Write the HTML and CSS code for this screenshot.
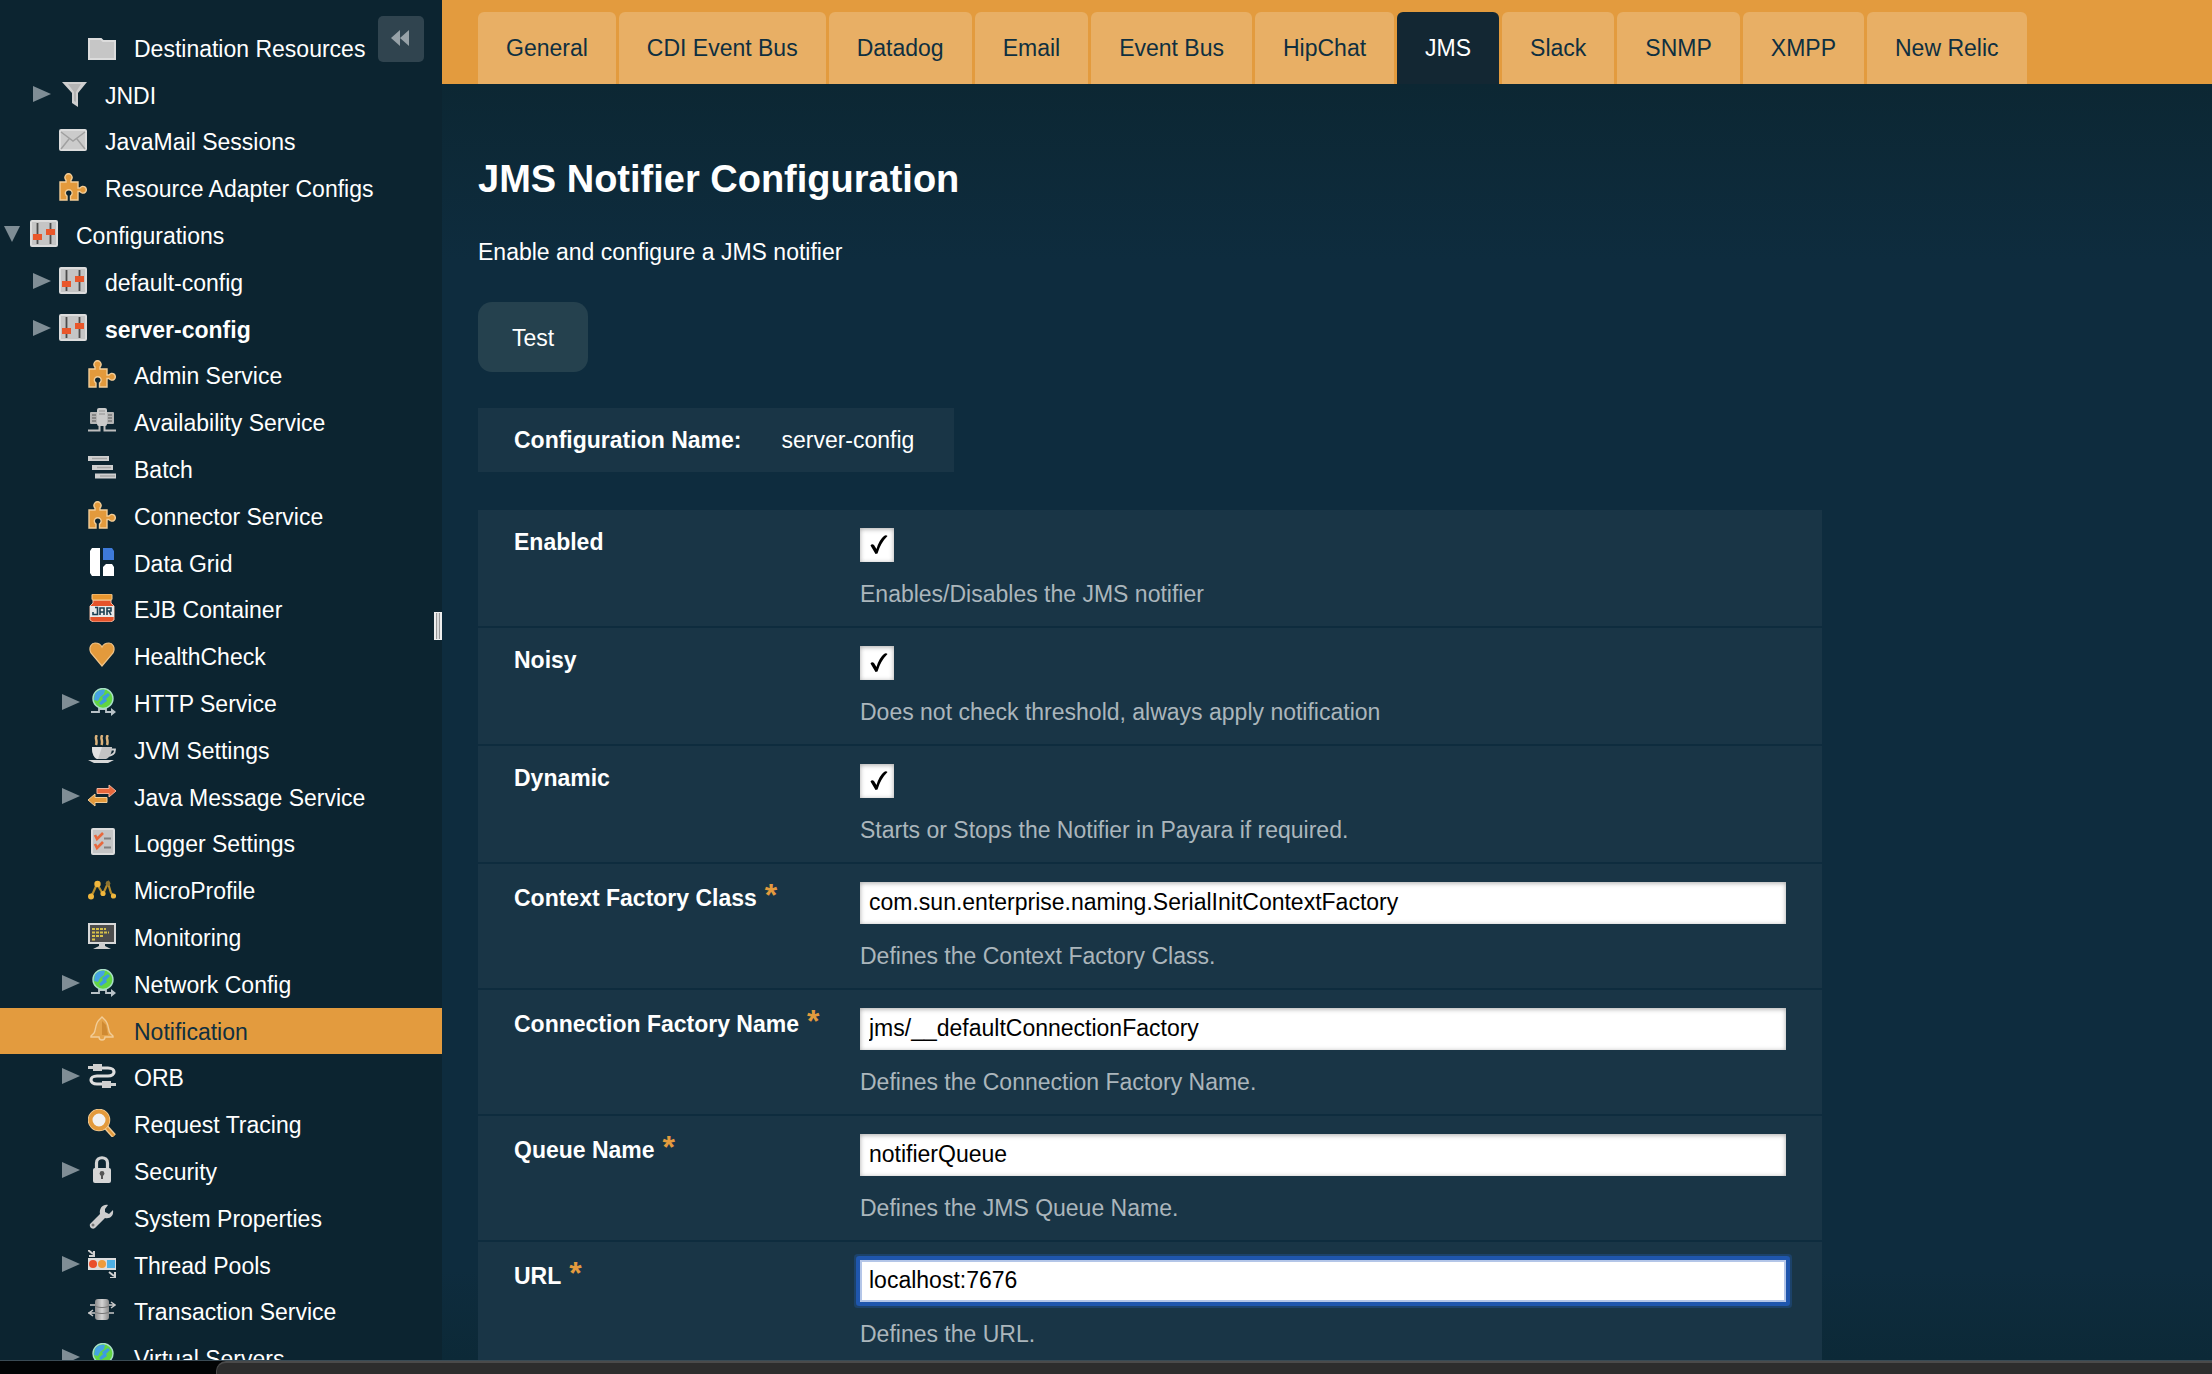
FILE: index.html
```html
<!DOCTYPE html>
<html lang="en">
<head>
<meta charset="utf-8">
<title>JMS Notifier Configuration</title>
<link rel="stylesheet" href="styles.css">
</head>
<body>
<svg class="defs" aria-hidden="true">
  <defs>
    <linearGradient id="metal" x1="0" y1="0" x2="1" y2="0">
      <stop offset="0" stop-color="#8c8c8c"/><stop offset=".5" stop-color="#d4d4d4"/><stop offset="1" stop-color="#8c8c8c"/>
    </linearGradient>
  </defs>
  <symbol id="i-right" viewBox="0 0 18 16"><path d="M0 0L18 8L0 16Z" fill="#7f8d95"/></symbol>
  <symbol id="i-down" viewBox="0 0 18 16"><path d="M0 0H16L8 16Z" fill="#7f8d95"/></symbol>
  <symbol id="i-folder" viewBox="0 0 28 28"><path d="M1 6H13L15 8H27V26H1Z" fill="#c6c6c6" stroke="#dcdcdc" stroke-width="2"/></symbol>
  <symbol id="i-funnel" viewBox="0 0 28 28"><path d="M3 2H28L19 13V27L13 23V13Z" fill="#cfcfcf"/><path d="M9 4H22L17 12V22L15 21V12Z" fill="#b4b4b4"/></symbol>
  <symbol id="i-mail" viewBox="0 0 28 28"><rect x="1" y="4" width="26" height="20" rx="1" fill="#cbcbcb" stroke="#dcdcdc" stroke-width="2"/><path d="M2 6L14 15L26 6M2 23L10 13M26 23L18 13" fill="none" stroke="#a0a0a0" stroke-width="1.5"/></symbol>
  <symbol id="i-puzzle" viewBox="0 0 28 28"><path d="M1 9H7V7A3.6 3.6 0 1 1 12 7V9H19V15H21A3.4 3.4 0 1 1 21 18.500H19V27H11.500V23A3.400 3.400 0 1 0 8 23V27H1Z" fill="#e39a3c" stroke="#f3cd97" stroke-width="1.400"/></symbol>
  <symbol id="i-sliders" viewBox="0 0 28 28"><rect x="1" y="1" width="26" height="25" rx="1" fill="#c5c5c5" stroke="#dcdcdc" stroke-width="2"/><path d="M7.500 3V24M20.500 3V24" stroke="#4c4c4c" stroke-width="1.800"/><path d="M3 14H12V20H3ZM16 9H25V15H16Z" fill="#e9572b"/></symbol>
  <symbol id="i-cluster" viewBox="0 0 28 28"><path d="M0 23.500H11.500V16M28 23.500H16.500V16" fill="none" stroke="#bdbdbd" stroke-width="2"/><rect x="2" y="5" width="8" height="12" rx="1" fill="#b5b5b5"/><rect x="18" y="5" width="8" height="12" rx="1" fill="#b5b5b5"/><rect x="9" y="1" width="10" height="18" rx="2" fill="#cacaca"/><path d="M4 8H8M4 11H8M20 8H24M20 11H24M4 14H8M20 14H24" stroke="#777" stroke-width="1.400"/><path d="M11 4H17M11 7H17" stroke="#909090" stroke-width="1"/></symbol>
  <symbol id="i-batch" viewBox="0 0 28 28"><path d="M0 2H21V7H0ZM4 11H25V16H4ZM7 19.500H28V24.500H7Z" fill="#cfcfcf"/><path d="M4 4.500H19M9 13.500H23M12 22H27" stroke="#a6a6a6" stroke-width="1.500"/></symbol>
  <symbol id="i-grid" viewBox="0 0 28 28"><path d="M4 0H12V28H4L2 25V3Z" fill="#fff"/><path d="M15 0H24L26 3V12H15Z" fill="#3e7ad9"/><path d="M18 16H24L26 19V28H15V19Z" fill="#fff"/></symbol>
  <symbol id="i-jar" viewBox="0 0 28 28"><path d="M5 6H23V9L26 12V26L23 28H5L2 26V12L5 9Z" fill="#e5532b" stroke="#f0b9a0" stroke-width="1"/><rect x="4" y="0" width="20" height="6" rx="1" fill="#e8962f" stroke="#f3cd97" stroke-width="1"/><rect x="2" y="12" width="24" height="11" fill="#e9e9e9"/><path d="M7 13.500H9.500V20.500H5V18M12 21V14H16V21M12 18H16M19 21V14H23V17H19M21 17L23 21" fill="none" stroke="#1b3f52" stroke-width="1.600"/></symbol>
  <symbol id="i-heart" viewBox="0 0 28 28"><path d="M14 25L3 12C0 6 4 2 7 2C11 2 13 4 14 6C15 4 17 2 21 2C24 2 28 6 25 12Z" fill="#e39a3c" stroke="#f0c488" stroke-width="1.200"/></symbol>
  <symbol id="i-globe" viewBox="0 0 28 28"><path d="M3 24H11V21H18V24H24" fill="none" stroke="#b9c2c7" stroke-width="1.800"/><path d="M23 20L28 24L23 28Z" fill="#b9c2c7"/><circle cx="15" cy="10.500" r="10" fill="#62d542" stroke="#a9dfc8" stroke-width="1.400"/><path d="M7 6C9 2 14 1 17 2L16 6L12 9L10 13L6 12Z" fill="#45a3e3"/><path d="M20 5L22 7L18 11L19 13L13 17L11 15L15 11L14 9Z" fill="#3c9be0"/></symbol>
  <symbol id="i-cup" viewBox="0 0 28 28"><path d="M9 0C6 3 10 5 8 10M14.500 0C11.500 3 15.500 5 13.500 10M20 0C17 3 21 5 19 10" fill="none" stroke="#dcb37c" stroke-width="2.500"/><path d="M22 14.500H27C27 19 24 20 21 21" fill="none" stroke="#d2d2d2" stroke-width="1.800"/><path d="M4 12H24C24 19 21 23 18 24H9C6 23 4 19 4 12Z" fill="#c4c4c4"/><path d="M4 12H14L10 24C6 23 4 19 4 12Z" fill="#e2e2e2"/><path d="M0 25H26L20 28H6Z" fill="#d8d8d8"/></symbol>
  <symbol id="i-arrows" viewBox="0 0 28 28"><path d="M9 6.500H21V3L28 9L21 15V11.500H9Z" fill="#e8683c" stroke="#f3b39b" stroke-width="1"/><path d="M19 15.500H7V12L0 18L7 24V20.500H19Z" fill="#e39a3c" stroke="#f3cd97" stroke-width="1"/></symbol>
  <symbol id="i-check" viewBox="0 0 28 28"><rect x="4" y="1" width="22" height="25" rx="1" fill="#c5c5c5" stroke="#dcdcdc" stroke-width="2"/><path d="M7 7L9 11L15 5M7 16L9 20L15 14" fill="none" stroke="#e8683c" stroke-width="2.600"/><path d="M16 10.500H23M16 19.500H23" stroke="#808080" stroke-width="1.800"/></symbol>
  <symbol id="i-micro" viewBox="0 0 28 28"><path d="M2 22L5 18L9 9L15 19L20 8L23 18L26 21" fill="none" stroke="#b58c2c" stroke-width="2.200"/><circle cx="3" cy="21.500" r="3" fill="#f0b63c"/><circle cx="9.500" cy="9" r="3.200" fill="#f0b63c"/><circle cx="15" cy="18.500" r="2.600" fill="#f0b63c"/><circle cx="20" cy="8.500" r="2.400" fill="#8c7330"/><circle cx="25.500" cy="21" r="2.600" fill="#f0b63c"/></symbol>
  <symbol id="i-monitor" viewBox="0 0 28 28"><rect x="1" y="2" width="26" height="19" fill="#4d4d4d" stroke="#d8d8d8" stroke-width="2"/><path d="M11 21H17V24L23 27H5L11 24Z" fill="#cfcfcf"/><path d="M4 7H18M4 10.500H21M4 14H15M4 17.500H7" stroke="#d7c14a" stroke-width="2" stroke-dasharray="3 1"/></symbol>
  <symbol id="i-bell" viewBox="0 0 28 28"><path d="M14 1L17 4C21 8 20 14 22 17L25 20V21H17C17 25 11 25 11 21H3V20L6 17C8 14 7 8 11 4Z" fill="#e5a34a" stroke="#f2cd98" stroke-width="1.400"/><path d="M14 5L18 9L20 19H14Z" fill="#cf8a33"/></symbol>
  <symbol id="i-cable" viewBox="0 0 28 28"><path d="M12 6H20C28 6 28 14 20 14H9C1 14 1 22 9 22H15" fill="none" stroke="#dedede" stroke-width="3.200"/><path d="M0 4H5V2H14V9H5V7H0ZM14 19H23V21H28V24H23V26H14Z" fill="#cfcfcf"/></symbol>
  <symbol id="i-search" viewBox="0 0 28 28"><path d="M18 18L26 27" stroke="#f3cd97" stroke-width="5"/><path d="M18 18L26 27" stroke="#e39a3c" stroke-width="2.500"/><circle cx="11" cy="11" r="8.500" fill="#f4f4f4" stroke="#f3cd97" stroke-width="5.500"/><circle cx="11" cy="11" r="8.500" fill="#f1f1f1" stroke="#e39a3c" stroke-width="4"/></symbol>
  <symbol id="i-lock" viewBox="0 0 28 28"><path d="M8.500 14V7C8.500 0 19.500 0 19.500 7V14" fill="none" stroke="#d3d3d3" stroke-width="3.200"/><rect x="5" y="12" width="18" height="15" rx="2" fill="#d6d6d6"/><circle cx="14" cy="17.500" r="2.400" fill="#555"/><path d="M14 18V23" stroke="#555" stroke-width="2"/></symbol>
  <symbol id="i-wrench" viewBox="0 0 28 28"><path d="M2 21L12 11C11 5 15 1 20 2L17 6V9L21 11L25 7C26 13 22 16 17 15L7 25C4 27 1 24 2 21Z" fill="#cdcdcd"/><circle cx="5" cy="22" r="1.500" fill="#777"/></symbol>
  <symbol id="i-threads" viewBox="0 0 28 28"><rect x="0" y="8" width="28" height="12" fill="#dedede"/><circle cx="5" cy="14" r="4" fill="#ea4f2b"/><circle cx="14" cy="14" r="4" fill="#ef9b3a"/><rect x="19" y="10" width="8" height="8" fill="#4fb0e4"/><path d="M0 0L5 4M6 1V6H1M21 22L26 26M27 22V28H22" fill="none" stroke="#d0d0d0" stroke-width="2"/></symbol>
  <symbol id="i-transaction" viewBox="0 0 28 28"><path d="M2 9H26M0 17H26M23 6L27 9L23 12M5 14L1 17L5 20" fill="none" stroke="#c8c8c8" stroke-width="1.500"/><rect x="7" y="3" width="14" height="21" rx="3" fill="url(#metal)"/><path d="M7 10C10 12 18 12 21 10M7 16C10 18 18 18 21 16" fill="none" stroke="#777" stroke-width="1"/></symbol>
</svg>
<div class="window">
  <nav class="sidebar" aria-label="Server tree">
    <ul class="tree">
      <li class="l3"><a href="#"><i></i><svg class="icon"><use href="#i-folder"/></svg>Destination Resources</a></li>
      <li class="l2"><a href="#"><i><svg><use href="#i-right"/></svg></i><svg class="icon"><use href="#i-funnel"/></svg>JNDI</a></li>
      <li class="l2"><a href="#"><i></i><svg class="icon"><use href="#i-mail"/></svg>JavaMail Sessions</a></li>
      <li class="l2"><a href="#"><i></i><svg class="icon"><use href="#i-puzzle"/></svg>Resource Adapter Configs</a></li>
      <li class="l1"><a href="#"><i><svg><use href="#i-down"/></svg></i><svg class="icon"><use href="#i-sliders"/></svg>Configurations</a></li>
      <li class="l2"><a href="#"><i><svg><use href="#i-right"/></svg></i><svg class="icon"><use href="#i-sliders"/></svg>default-config</a></li>
      <li class="l2 open"><a href="#"><i><svg><use href="#i-right"/></svg></i><svg class="icon"><use href="#i-sliders"/></svg>server-config</a></li>
      <li class="l3"><a href="#"><i></i><svg class="icon"><use href="#i-puzzle"/></svg>Admin Service</a></li>
      <li class="l3"><a href="#"><i></i><svg class="icon"><use href="#i-cluster"/></svg>Availability Service</a></li>
      <li class="l3"><a href="#"><i></i><svg class="icon"><use href="#i-batch"/></svg>Batch</a></li>
      <li class="l3"><a href="#"><i></i><svg class="icon"><use href="#i-puzzle"/></svg>Connector Service</a></li>
      <li class="l3"><a href="#"><i></i><svg class="icon"><use href="#i-grid"/></svg>Data Grid</a></li>
      <li class="l3"><a href="#"><i></i><svg class="icon"><use href="#i-jar"/></svg>EJB Container</a></li>
      <li class="l3"><a href="#"><i></i><svg class="icon"><use href="#i-heart"/></svg>HealthCheck</a></li>
      <li class="l3"><a href="#"><i><svg><use href="#i-right"/></svg></i><svg class="icon"><use href="#i-globe"/></svg>HTTP Service</a></li>
      <li class="l3"><a href="#"><i></i><svg class="icon"><use href="#i-cup"/></svg>JVM Settings</a></li>
      <li class="l3"><a href="#"><i><svg><use href="#i-right"/></svg></i><svg class="icon"><use href="#i-arrows"/></svg>Java Message Service</a></li>
      <li class="l3"><a href="#"><i></i><svg class="icon"><use href="#i-check"/></svg>Logger Settings</a></li>
      <li class="l3"><a href="#"><i></i><svg class="icon"><use href="#i-micro"/></svg>MicroProfile</a></li>
      <li class="l3"><a href="#"><i></i><svg class="icon"><use href="#i-monitor"/></svg>Monitoring</a></li>
      <li class="l3"><a href="#"><i><svg><use href="#i-right"/></svg></i><svg class="icon"><use href="#i-globe"/></svg>Network Config</a></li>
      <li class="l3 selected"><a href="#" aria-current="page"><i></i><svg class="icon"><use href="#i-bell"/></svg>Notification</a></li>
      <li class="l3"><a href="#"><i><svg><use href="#i-right"/></svg></i><svg class="icon"><use href="#i-cable"/></svg>ORB</a></li>
      <li class="l3"><a href="#"><i></i><svg class="icon"><use href="#i-search"/></svg>Request Tracing</a></li>
      <li class="l3"><a href="#"><i><svg><use href="#i-right"/></svg></i><svg class="icon"><use href="#i-lock"/></svg>Security</a></li>
      <li class="l3"><a href="#"><i></i><svg class="icon"><use href="#i-wrench"/></svg>System Properties</a></li>
      <li class="l3"><a href="#"><i><svg><use href="#i-right"/></svg></i><svg class="icon"><use href="#i-threads"/></svg>Thread Pools</a></li>
      <li class="l3"><a href="#"><i></i><svg class="icon"><use href="#i-transaction"/></svg>Transaction Service</a></li>
      <li class="l3"><a href="#"><i><svg><use href="#i-right"/></svg></i><svg class="icon"><use href="#i-globe"/></svg>Virtual Servers</a></li>
    </ul>
    <button class="collapse" type="button" aria-label="Collapse tree"><svg viewBox="0 0 18 16"><path d="M9 0V16L0 8ZM18 0V16L9 8Z" fill="#97a2a8"/></svg></button>
    <div class="splitter"></div>
  </nav>
  <main class="main">
    <nav class="tabs" aria-label="Notifiers">
      <a href="#">General</a>
      <a href="#">CDI Event Bus</a>
      <a href="#">Datadog</a>
      <a href="#">Email</a>
      <a href="#">Event Bus</a>
      <a href="#">HipChat</a>
      <a href="#" class="active" aria-current="page">JMS</a>
      <a href="#">Slack</a>
      <a href="#">SNMP</a>
      <a href="#">XMPP</a>
      <a href="#">New Relic</a>
    </nav>
    <form class="content">
      <h1>JMS Notifier Configuration</h1>
      <p class="intro">Enable and configure a JMS notifier</p>
      <button class="test" type="button">Test</button>
      <div class="config-name"><strong>Configuration Name:</strong><span>server-config</span></div>
      <div class="sheet">
        <div class="row">
          <label for="enabled">Enabled</label>
          <div class="field"><input type="checkbox" id="enabled" checked><p>Enables/Disables the JMS notifier</p></div>
        </div>
        <div class="row">
          <label for="noisy">Noisy</label>
          <div class="field"><input type="checkbox" id="noisy" checked><p>Does not check threshold, always apply notification</p></div>
        </div>
        <div class="row">
          <label for="dynamic">Dynamic</label>
          <div class="field"><input type="checkbox" id="dynamic" checked><p>Starts or Stops the Notifier in Payara if required.</p></div>
        </div>
        <div class="row required">
          <label for="factory">Context Factory Class<span class="star">*</span></label>
          <div class="field"><input type="text" id="factory" value="com.sun.enterprise.naming.SerialInitContextFactory"><p>Defines the Context Factory Class.</p></div>
        </div>
        <div class="row required">
          <label for="connection">Connection Factory Name<span class="star">*</span></label>
          <div class="field"><input type="text" id="connection" value="jms/__defaultConnectionFactory"><p>Defines the Connection Factory Name.</p></div>
        </div>
        <div class="row required">
          <label for="queue">Queue Name<span class="star">*</span></label>
          <div class="field"><input type="text" id="queue" value="notifierQueue"><p>Defines the JMS Queue Name.</p></div>
        </div>
        <div class="row required">
          <label for="url">URL<span class="star">*</span></label>
          <div class="field"><input type="text" id="url" class="focused" value="localhost:7676"><p>Defines the URL.</p></div>
        </div>
      </div>
    </form>
  </main>
</div>
<div class="desktop"><div class="panel"></div></div>
</body>
</html>
```
FILE: styles.css
```css
* { box-sizing: border-box; }

body {
  margin: 0;
  height: 100vh;
  display: flex;
  flex-direction: column;
  overflow: hidden;
  background: #020405;
  color: #fff;
  font: 23px/28px "Liberation Sans", Arial, sans-serif;
}

.defs { position: absolute; width: 0; height: 0; }

.window {
  flex: 1;
  min-height: 0;
  display: flex;
}

/* Sidebar tree */
.sidebar {
  position: relative;
  flex: 0 0 442px;
  padding-top: 25px;
  overflow: hidden;
  background: #0c2430;
}

.tree { margin: 0; padding: 0; list-style: none; }
.tree li { height: 47px; }
.tree li:nth-child(5n + 2) { height: 46px; }

.tree a {
  display: flex;
  align-items: flex-start;
  height: 100%;
  color: #fff;
  line-height: 48px;
  text-decoration: none;
  white-space: nowrap;
}

.tree .l1 a { padding-left: 4px; }
.tree .l2 a { padding-left: 33px; }
.tree .l3 a { padding-left: 62px; }
.tree .open a { font-weight: bold; }
.tree .selected { background: #e39b3e; }
.tree .selected a { color: #0f2f40; }

.tree i { flex: 0 0 26px; height: 16px; margin-top: 14px; }
.tree i svg { display: block; width: 18px; height: 16px; }
.tree .icon { flex: 0 0 28px; height: 28px; margin: 8px 18px 0 0; }

.collapse {
  position: absolute;
  top: 16px;
  right: 18px;
  width: 46px;
  height: 46px;
  padding: 0 2px 2px 0;
  border: 0;
  border-radius: 5px;
  background: #30444f;
}
.collapse svg { display: block; width: 18px; height: 16px; margin: 0 auto; }

.splitter {
  position: absolute;
  top: 45%;
  right: 0;
  width: 8px;
  height: 28px;
  border: 1px solid #eee;
  border-width: 1px 2px;
  background: linear-gradient(90deg, #999 1px, #ddd 1px, #ddd 3px, #999 3px);
}

/* Main column */
.main {
  flex: 1;
  min-width: 0;
  display: flex;
  flex-direction: column;
  overflow: hidden;
  background: linear-gradient(#0c2733 84px, #0e2c3e 260px, #0e2c3e 1270px, #0c2937);
}

.tabs {
  flex: none;
  display: flex;
  gap: 3px;
  padding: 12px 36px 0;
  background: #e39b3e;
}
.tabs a {
  padding: 0 28px;
  border-radius: 6px 6px 0 0;
  background: #e8af65;
  color: #0f2f40;
  line-height: 72px;
  text-decoration: none;
  white-space: nowrap;
}
.tabs .active { background: #132733; color: #fff; }

.content { padding: 70px 36px 0; }

h1 { margin: 0; font-size: 38px; line-height: 50px; }
.intro { margin: 34px 0 36px; }

.test {
  display: block;
  height: 70px;
  padding: 2px 34px 0;
  border: 0;
  border-radius: 14px;
  background: #25414e;
  color: #fff;
  font: inherit;
}

.config-name {
  display: flex;
  gap: 40px;
  width: fit-content;
  margin: 36px 0 38px;
  padding: 18px 40px 18px 36px;
  background: #193546;
}

.sheet { max-width: 1344px; }

.row {
  display: grid;
  grid-template-columns: 346px 1fr;
  padding: 18px 36px;
  border-bottom: 2px solid #0e2c3e;
  background: #193546;
}
.row label { font-weight: bold; }
.required label { padding-top: 2px; }
.star {
  margin-left: 8px;
  color: #e39b3e;
  font-size: 32px;
  line-height: 0;
}

.field p { margin: 18px 0 0; color: #abb6bc; }

input {
  display: block;
  margin: 0;
  border: 0;
  border-radius: 0;
  background-color: #fff;
  box-shadow: inset 0 1px 5px rgba(0, 0, 0, .35);
  color: #000;
  font: inherit;
}
input[type="text"] { width: 100%; height: 42px; padding: 0 9px 2px; }
input[type="checkbox"] { width: 34px; height: 34px; appearance: none; }
input[type="checkbox"]:checked {
  background-image: url("data:image/svg+xml,%3Csvg xmlns='http://www.w3.org/2000/svg' viewBox='0 0 34 34'%3E%3Cpath d='M10.500 17.500Q12 15.500 14 17L16.500 21Q19 12 24 8Q26 6.500 27.500 8Q20.500 15 17.500 25.500L15.500 26Z'/%3E%3C/svg%3E");
}
input.focused {
  border-radius: 1px;
  box-shadow: 0 0 0 4px #1f56ad, 0 0 0 6px #1c4269, inset 0 0 0 2px #b4c6e8;
}

/* Strip of the desktop under the window */
.desktop {
  flex: 0 0 14px;
  padding-left: 216px;
  border-top: 1px solid #3a4b55;
}
.panel {
  height: 13px;
  border-top: 2px solid #4a4a4a;
  border-left: 1px solid #4a4a4a;
  border-top-left-radius: 10px;
  background: #2d2d2d;
}
```
